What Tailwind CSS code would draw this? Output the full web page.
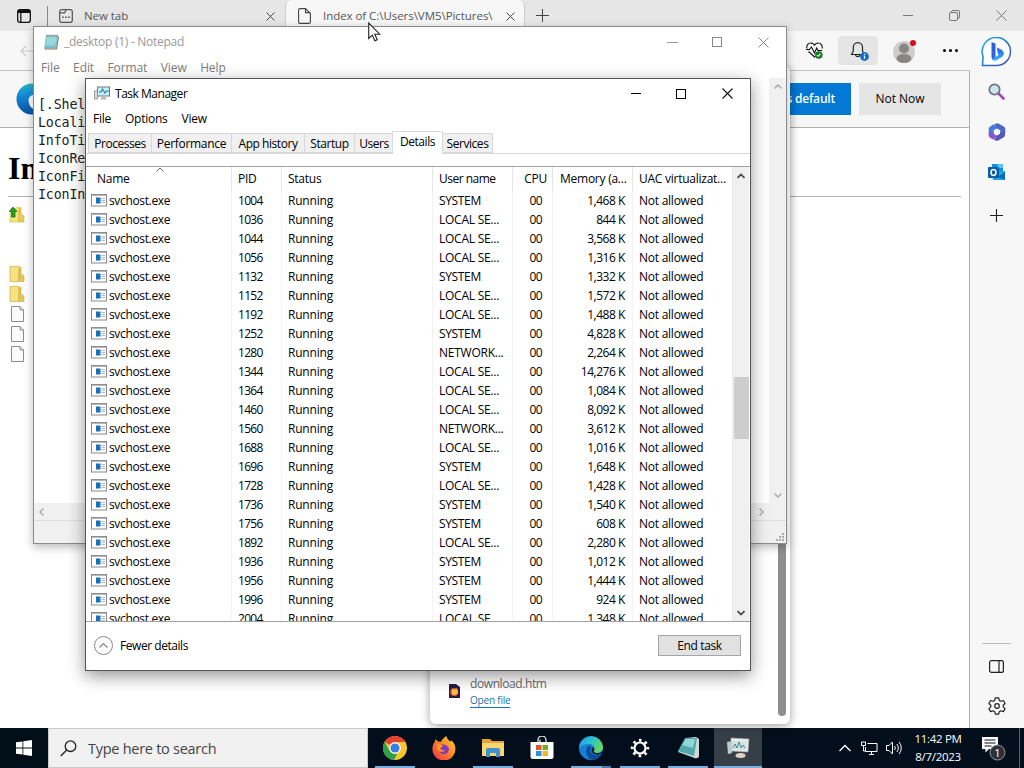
<!DOCTYPE html>
<html lang="en">
<head>
<meta charset="utf-8">
<title>Desktop</title>
<script src="https://cdn.jsdelivr.net/npm/@tailwindcss/browser@4"></script>
</head>
<body class="relative h-[768px] w-[1024px] overflow-hidden bg-white font-['Open_Sans','Noto_Sans',sans-serif] text-[12px] text-black">

<!-- Browser -->
<div class="flex h-[728px] flex-col">
  <div class="flex h-[31px] shrink-0 items-start bg-[#e6e6e6] text-[#555]">
    <svg class="ml-[17px] mt-[9px] size-[14px]" viewBox="0 0 14 14" fill="none" stroke="#111" stroke-width="1.3"><rect x=".7" y=".7" width="12.6" height="12.6" rx="2"/><path d="M1 2.5h12" stroke-width="3"/><path d="M3.8 3v10"/></svg>
    <div class="ml-[16px] mt-[6px] h-[20px] w-px bg-[#888]"></div>
    <svg class="ml-[11px] mt-[9px] size-[14px]" viewBox="0 0 14 14" fill="none" stroke="#555" stroke-width="1.2"><rect x=".7" y=".7" width="12.6" height="12.6" rx="2"/><path d="M1 3.8h4.5l1.6-2.8"/><path d="M3.2 8.2h1.6M6.2 8.2h1.6M9.2 8.2h1.6" stroke-width="1.6"/></svg>
    <div class="ml-[11px] mt-[7px] w-[44px] whitespace-nowrap text-[11.5px] leading-[18px] tracking-[-0.05px]">New tab</div>
    <svg class="ml-[138px] mt-[12px] size-[9px]" viewBox="0 0 9 9" stroke="#444"><path d="M.5.5l8 8M8.5.5l-8 8"/></svg>
    <div class="ml-[10px] flex h-[31px] w-[240px] items-start rounded-t-md border-x border-[#ccc] bg-[#f7f7f7]">
      <svg class="ml-[12px] mt-[8px] h-[16px] w-[13px]" viewBox="0 0 13 16" fill="none" stroke="#444" stroke-width="1.1"><path d="M2 .6h5.5L12.4 5.500v8.500a1.400 1.400 0 0 1-1.400 1.400H2A1.400 1.400 0 0 1 .6 14V2A1.400 1.400 0 0 1 2 .6zM7.500 .6v4h4.900"/></svg>
      <div class="ml-[12px] mt-[7px] w-[171px] whitespace-nowrap text-[11.5px] leading-[18px] tracking-[-0.05px]">Index of C:\Users\VM5\Pictures\</div>
      <svg class="ml-[12px] mt-[12px] size-[9px]" viewBox="0 0 9 9" stroke="#444"><path d="M.5.5l8 8M8.500.5l-8 8"/></svg>
    </div>
    <svg class="ml-[11px] mt-[9px] size-[13px]" viewBox="0 0 13 13" stroke="#444"><path d="M6.500 0v13M0 6.500h13"/></svg>
    <div class="ml-auto mt-[10px] mr-[17px] flex items-center">
      <div class="h-px w-[10px] bg-[#777]"></div>
      <svg class="ml-[36px] size-[11px]" viewBox="0 0 11 11" fill="none" stroke="#777"><rect x=".5" y="2.500" width="8" height="8" rx="1.500"/><path d="M2.500 2.500v-.5a1.500 1.500 0 0 1 1.500-1.500h5a1.500 1.500 0 0 1 1.500 1.500v5a1.500 1.500 0 0 1-1.500 1.500"/></svg>
      <svg class="ml-[36px] size-[11px]" viewBox="0 0 11 11" stroke="#777"><path d="M.5.5l10 10M10.500.5l-10 10"/></svg>
    </div>
  </div>

  <div class="flex min-h-0 flex-1">
    <div class="flex w-[970px] flex-col">
      <div class="flex h-[40px] shrink-0 items-center border-b border-[#c4c4c4] bg-[#f7f7f7]">
        <svg class="ml-[20px] h-[12px] w-[14px]" viewBox="0 0 14 12" fill="none" stroke="#ccc" stroke-width="1.200"><path d="M14 6H1M6 1L1 6l5 5"/></svg>
        <svg class="ml-[772px] mt-px h-[18px] w-[18px]" viewBox="0 0 18 18" fill="none" stroke="#111" stroke-width="1.100"><path d="M.9 6.500C.2 3 2.500 1 4.800 1 6.800 1 8 2.300 8.500 3.200 9 2.300 10.200 1 12.200 1c2.600 0 4.500 2.300 3.900 5.500M2.500 9.500L8.500 15l1-1M0 7.500h3.500l2-2.500 3 6 2.200-5 1.300 2.500h4"/><circle cx="12.800" cy="13" r="3.800" fill="#157a1b" stroke="none"/><path d="M11 13l1.200 1.300 2.200-2.500" stroke="#fff"/></svg>
        <div class="ml-[14px] flex h-[29px] w-[40px] items-center justify-center rounded-sm bg-[#e5e5e5]">
          <svg class="ml-[1px] h-[20px] w-[20px]" viewBox="0 0 20 20" fill="none" stroke="#222" stroke-width="1.200"><path d="M2.500 13.500L4.300 10V6.300a4.600 4.600 0 0 1 9.200 0V10l1.800 3.500zM6.500 14a2.400 2.400 0 0 0 4.500 0"/><circle cx="15.500" cy="15.500" r="4.400" fill="#1370c9" stroke="none"/><path d="M15.500 14.800v3M15.500 12.800v1.200" stroke="#fff"/></svg>
        </div>
        <svg class="ml-[14px] h-[24px] w-[24px]" viewBox="0 0 24 24"><circle cx="12" cy="13" r="11" fill="#cfcdcb"/><circle cx="12" cy="9.500" r="5" fill="#898684"/><ellipse cx="12" cy="19.500" rx="7.500" ry="4.500" fill="#898684"/><circle cx="21" cy="4" r="3" fill="#d90f1a"/></svg>
        <div class="ml-[27px] flex gap-[3px]"><i class="size-[3px] rounded-full bg-black"></i><i class="size-[3px] rounded-full bg-black"></i><i class="size-[3px] rounded-full bg-black"></i></div>
      </div>
      <div class="flex h-[57px] shrink-0 items-center border-r border-b border-[#b0b0b0] bg-[#f7f7f7]">
        <svg class="ml-[16px] size-[32px]" viewBox="0 0 32 32"><defs><linearGradient id="ed" x1="0" y1="0" x2="0" y2="1"><stop offset="0" stop-color="#29b5c9"/><stop offset=".4" stop-color="#1487d8"/><stop offset="1" stop-color="#0a4ea0"/></linearGradient></defs><circle cx="16" cy="16" r="15.500" fill="url(#ed)"/><path d="M13 20c-2-6 3-9 7-8v14c-4 0-6-2-7-6z" fill="#fff"/></svg>
        <div class="ml-[712px] flex h-[32px] w-[91px] items-center justify-end bg-[#0378d4] pr-[16px] text-[12px] font-semibold whitespace-nowrap text-white tracking-[-0.2px]">s default</div>
        <div class="ml-[8px] flex h-[32px] w-[82px] items-center justify-center bg-[#e5e5e5] text-[12px]">Not Now</div>
      </div>
      <div class="flex flex-1 flex-col border-r border-[#b0b0b0] pl-[8px]">
        <div class="mt-[21px] h-[48px] w-[953px] border-b border-[#b0b0b0] font-['Liberation_Serif',serif] text-[32px] leading-[38px] font-bold">In</div>
        <svg class="mt-[9px] ml-px h-[18px] w-[16px]" viewBox="0 0 16 18"><path d="M4 3l6-2v15H1V7z" fill="#f2e47e" stroke="#cdb545" stroke-width=".6"/><path d="M10 2.500l2-1V8l3 2v6h-5z" fill="#e6cf5a" stroke="#cfa73a" stroke-width=".6"/><path d="M0 5.500L4 1l4 4.500H6v5.500H2.500V5.500z" fill="#2d9a28" stroke="#126c12" stroke-width=".7"/></svg>
        <div class="mt-[42px] ml-px flex flex-col gap-[4px]" id="files"></div>
      </div>
    </div>
    <div class="flex w-[54px] flex-col items-center bg-[#f7f7f7] pr-px">
      <svg class="mt-[5px] size-[31px]" viewBox="0 0 31 31"><defs><linearGradient id="bg" x1="0" y1="0" x2="1" y2="1"><stop offset="0" stop-color="#2bb0ea"/><stop offset=".5" stop-color="#1a78d0"/><stop offset="1" stop-color="#4b50bd"/></linearGradient><linearGradient id="bb" x1="0" y1="0" x2="0" y2="1"><stop offset="0" stop-color="#2a5de0"/><stop offset="1" stop-color="#35b9ee"/></linearGradient></defs><path d="M15.500 1.500a14 14 0 1 1 0 28H1.500l.6-9A14 14 0 0 1 15.500 1.500z" fill="#fff" stroke="url(#bg)" stroke-width="1.500"/><path d="M10.500 6l4 1.500V20l-1 4c-2 0-3-1.500-3-3.500z" fill="#2b62e0"/><path d="M16 11.500l4.500 2.300c3 1.700 3 5.700 0 7.500l-5 2.900c-1.500.8-3.500.6-4.500-1l6.500-4.200-1-2.500z" fill="url(#bb)"/></svg>
      <svg class="mt-[16px] size-[17px]" viewBox="0 0 17 17"><path d="M10.500 10.500l5 5" stroke="#a648b5" stroke-width="2.600" stroke-linecap="round"/><circle cx="6.500" cy="6.500" r="5.200" fill="#cfe3ea" stroke="#69757d" stroke-width="1.700"/></svg>
      <svg class="mt-[23px] size-[18px]" viewBox="0 0 18 18" fill="none" stroke-width="5" stroke-linejoin="round"><path d="M7.500 3.200L3.200 5.800v6" stroke="#3f7fdc"/><path d="M3.200 9v3.500l4.300 2.300" stroke="#8a58c8"/><path d="M7.500 14.800l1.500.5 5.500-3.200V9" stroke="#5a55b9"/><path d="M14.800 10V5.900L9.500 2.800l-2 .6" stroke="#4a68cc"/></svg>
      <svg class="mt-[23px] size-[17px]" viewBox="0 0 17 17"><path d="M4 0h11v8H4z" fill="#1490df"/><path d="M9.500 0H15v4H9.500z" fill="#50c6f2"/><path d="M4 7h13v9H5z" fill="#1aa7e8"/><path d="M17 8l-7 5 7 3z" fill="#1066b8"/><rect y="3" width="11" height="11" rx="1" fill="#0a5ba5"/><ellipse cx="5.500" cy="8.500" rx="2.500" ry="2.900" fill="none" stroke="#fff" stroke-width="1.500"/></svg>
      <svg class="mt-[28px] size-[13px]" viewBox="0 0 13 13" stroke="#222" stroke-width="1.100"><path d="M6.500 0v13M0 6.500h13"/></svg>
      <div class="mt-auto h-px w-[29px] bg-[#bbb]"></div>
      <svg class="mt-[16px] h-[13px] w-[15px]" viewBox="0 0 15 13" fill="none" stroke="#222" stroke-width="1.200"><rect x=".6" y=".6" width="13.800" height="11.800" rx="2"/><path d="M10 .6v11.800"/></svg>
      <svg class="mt-[24px] mb-[13px] size-[18px]" viewBox="0 0 18 18" fill="none" stroke="#222" stroke-width="1.200" stroke-linejoin="round"><circle cx="9" cy="9" r="2.300"/><path d="M7.300 .9h3.400l.6 2.500 1.600.9 2.500-.8 1.700 3-1.900 1.700v1.700l1.900 1.700-1.700 3-2.500-.8-1.600.9-.6 2.500H7.300l-.6-2.500-1.600-.9-2.500.8-1.700-3 1.900-1.700V8.200L.9 6.500l1.700-3 2.500.8 1.600-.9z"/></svg>
    </div>
  </div>
</div>

<!-- Downloads flyout -->
<div class="absolute top-[66px] left-[430px] flex h-[658px] w-[360px] items-end rounded-md bg-white shadow-[0_2px_10px_rgba(0,0,0,.38)]">
  <svg class="mb-[26px] ml-[18px] h-[14px] w-[12px]" viewBox="0 0 12 14"><path d="M1 0h7l4 3v11H1z" fill="#2a1a4a"/><circle cx="6.300" cy="8" r="4" fill="#f2603a"/><path d="M4 5l3 1 2-2 1 5-3 2-3-1z" fill="#f8c040"/></svg>
  <div class="mb-[16px] ml-[10px] flex flex-col items-start">
    <div class="text-[12px] leading-[16px] tracking-[-0.4px] text-[#666]">download.htm</div>
    <div class="mt-px border-b border-[#1b72ad] text-[10px] leading-[14px] tracking-[-0.2px] text-[#1b72ad]">Open file</div>
  </div>
  <div class="mr-[4px] mb-[8px] ml-auto h-[560px] w-[8px] rounded-full bg-[#8e8e8e]"></div>
</div>

<!-- Notepad -->
<div class="absolute top-[26px] left-[33px] flex h-[518px] w-[754px] flex-col border border-[#8b8b8b] bg-white text-[#7c7c7c] shadow-[0_3px_9px_rgba(0,0,0,.28)]">
  <div class="flex h-[30px] shrink-0 items-center">
    <svg class="ml-[9px] size-[16px]" viewBox="0 0 16 16"><path d="M3 2h12l-2 12.500H1z" fill="#79bcc4"/><path d="M3 2h11l-1.500 10H2z" fill="#8bd0d6"/><path d="M15 2l1 1-2 12.500H2l-1-1h12z" fill="#8a7a66"/><path d="M3.500 1.500h11" stroke="#444" stroke-width="1.500" stroke-dasharray="1 1"/><path d="M4 5h9M4 7h8.500M3.500 9h8.500" stroke="#b8e6e8" stroke-width=".7"/></svg>
    <div class="ml-[5px] text-[12px] tracking-[-0.27px] whitespace-nowrap text-[#999]">_desktop (1) - Notepad</div>
    <div class="mr-[17px] ml-auto flex items-center">
      <div class="h-px w-[11px] bg-[#999]"></div>
      <div class="ml-[34px] size-[10px] border border-[#888]"></div>
      <svg class="ml-[36px] size-[11px]" viewBox="0 0 11 11" stroke="#888"><path d="M.5.5l10 10M10.500.5l-10 10"/></svg>
    </div>
  </div>
  <div class="flex h-[21px] shrink-0 items-center gap-[13.500px] pl-[7px] tracking-[-0.1px]">
    <span>File</span><span>Edit</span><span>Format</span><span>View</span><span>Help</span>
  </div>
  <div class="flex min-h-0 flex-1">
    <div class="flex-1 pt-[18px] pl-[4px] font-['DejaVu_Sans_Mono',monospace] text-[13.300px] leading-[18px] tracking-[-0.15px] text-[#222]">[.Shel<br>Locali<br>InfoTi<br>IconRe<br>IconFi<br>IconIn</div>
    <div class="flex w-[17px] flex-col items-center justify-between bg-[#f0f0f0] pt-[6px] pb-[5px]">
      <svg class="h-[5px] w-[8px]" viewBox="0 0 8 5" fill="none" stroke="#aaa" stroke-width="1.500"><path d="M.5 4.500L4 1l3.500 3.500"/></svg>
      <svg class="h-[5px] w-[8px]" viewBox="0 0 8 5" fill="none" stroke="#aaa" stroke-width="1.500"><path d="M.5.5L4 4 7.500.5"/></svg>
    </div>
  </div>
  <div class="flex h-[17px] shrink-0 items-center justify-between bg-[#f0f0f0] pr-[22px] pl-[5px]">
    <svg class="h-[8px] w-[5px]" viewBox="0 0 5 8" fill="none" stroke="#aaa" stroke-width="1.500"><path d="M4.500.5L1 4l3.500 3.500"/></svg>
    <svg class="h-[8px] w-[5px]" viewBox="0 0 5 8" fill="none" stroke="#aaa" stroke-width="1.500"><path d="M.5.5L4 4 .5 7.500"/></svg>
  </div>
  <div class="flex h-[23px] shrink-0 items-end justify-end border-t border-[#ddd] bg-[#f0f0f0] pr-px pb-px">
    <svg class="size-[9px]" viewBox="0 0 9 9" fill="#aaa"><path d="M6 0h2v2H6zM6 3h2v2H6zM3 3h2v2H3zM6 6h2v2H6zM3 6h2v2H3zM0 6h2v2H0z"/></svg>
  </div>
</div>

<!-- Task Manager -->
<div class="absolute top-[78px] left-[85px] flex h-[593px] w-[666px] flex-col border border-[#555] bg-white shadow-[0_5px_16px_rgba(0,0,0,.42)]">
  <div class="flex h-[29px] shrink-0 items-center">
    <svg class="ml-[8px] h-[15px] w-[16px]" viewBox="0 0 16 15"><rect x="3.500" y="1" width="12" height="9" fill="#c6edf3" stroke="#777"/><path d="M5 6h2l1.500-3 2.500 4 1.500-2H15" fill="none" stroke="#227fa8" stroke-width="1.100"/><path d="M8 10.500h3l2 3H6z" fill="#bbb"/><rect x=".5" y="5" width="3" height="8" fill="#ddd" stroke="#888" stroke-width=".8"/></svg>
    <div class="ml-[5px] pt-px text-[12px] tracking-[-0.48px] whitespace-nowrap">Task Manager</div>
    <div class="mr-[17px] ml-auto flex items-center">
      <div class="h-px w-[10px] bg-black"></div>
      <div class="ml-[35px] size-[10px] border border-black"></div>
      <svg class="ml-[36px] size-[11px]" viewBox="0 0 11 11" stroke="#111" stroke-width="1.100"><path d="M.5.5l10 10M10.500.5l-10 10"/></svg>
    </div>
  </div>
  <div class="flex h-[22px] shrink-0 items-center gap-[14px] pl-[7px] tracking-[-0.25px]">
    <span>File</span><span>Options</span><span>View</span>
  </div>
  <div class="flex h-[24px] shrink-0 items-end border-b border-[#d9d9d9] pl-[2px] text-[12px] leading-[19px] tracking-[-0.45px] whitespace-nowrap">
    <div class="h-[20px] w-[63px] border border-r-0 border-[#d9d9d9] bg-[#f0f0f0] text-center">Processes</div>
    <div class="h-[20px] w-[80px] border border-r-0 border-[#d9d9d9] bg-[#f0f0f0] text-center tracking-[-0.3px]">Performance</div>
    <div class="h-[20px] w-[73px] border border-r-0 border-[#d9d9d9] bg-[#f0f0f0] text-center">App history</div>
    <div class="h-[20px] w-[50px] border border-r-0 border-[#d9d9d9] bg-[#f0f0f0] text-center">Startup</div>
    <div class="h-[20px] w-[38px] border border-r-0 border-[#d9d9d9] bg-[#f0f0f0] pl-px text-center">Users</div>
    <div class="-mb-px h-[23px] w-[51px] border border-b-0 border-[#d9d9d9] bg-white text-center">Details</div>
    <div class="h-[20px] w-[50px] border border-l-0 border-[#d9d9d9] bg-[#f0f0f0] text-center">Services</div>
  </div>
  <div class="mt-[12px] flex h-[456px] shrink-0 border-y border-[#a0a0a0]">
    <div class="flex w-[646px] flex-col overflow-hidden">
      <div class="flex h-[24px] shrink-0 items-center whitespace-nowrap tracking-[-0.25px]">
        <div class="relative h-full w-[146px] border-r border-[#e5e5e5] pl-[11px] leading-[24px]">Name
          <svg class="absolute top-0 left-[70px] h-[5px] w-[8px]" viewBox="0 0 8 5" fill="none" stroke="#666"><path d="M.5 4.500L4 1l3.500 3.500"/></svg>
        </div>
        <div class="h-full w-[50px] border-r border-[#e5e5e5] pl-[6px] leading-[24px]">PID</div>
        <div class="h-full w-[151px] border-r border-[#e5e5e5] pl-[6px] leading-[24px]">Status</div>
        <div class="h-full w-[80px] border-r border-[#e5e5e5] pl-[6px] leading-[24px] tracking-[-0.5px]">User name</div>
        <div class="h-full w-[40px] border-r border-[#e5e5e5] pr-[5px] text-right leading-[24px]">CPU</div>
        <div class="h-full w-[80px] border-r border-[#e5e5e5] pl-[7px] leading-[24px]">Memory (a...</div>
        <div class="h-full w-[99px] pl-[6px] leading-[24px]">UAC virtualizat...</div>
      </div>
      <div id="rows" class="min-h-0 flex-1 overflow-hidden"></div>
    </div>
    <div class="flex w-[17px] flex-col items-center border-l border-[#e8e8e8] bg-[#f0f0f0]">
      <svg class="mt-[6px] h-[6px] w-[8px]" viewBox="0 0 8 6" fill="none" stroke="#444" stroke-width="1.700"><path d="M.5 5L4 1.500 7.500 5"/></svg>
      <div class="mt-[198px] h-[62px] w-[15px] bg-[#cdcdcd]"></div>
      <svg class="mt-auto mb-[5px] h-[6px] w-[8px]" viewBox="0 0 8 6" fill="none" stroke="#444" stroke-width="1.700"><path d="M.5 1L4 4.500 7.500 1"/></svg>
    </div>
  </div>
  <div class="flex flex-1 items-center pr-[9px] pb-px pl-[8px]">
    <svg class="size-[19px]" viewBox="0 0 19 19" fill="none" stroke="#888"><circle cx="9.500" cy="9.500" r="9"/><path d="M5.500 11.500l4-4 4 4" stroke-width="1.200"/></svg>
    <div class="ml-[7px] pt-px tracking-[-0.45px]">Fewer details</div>
    <div class="ml-auto flex h-[21px] w-[83px] items-center justify-center border border-[#a5a5a5] bg-[#e1e1e1] tracking-[-0.35px]">End task</div>
  </div>
</div>

<!-- Taskbar -->
<div class="flex h-[40px] bg-[#020e1c] text-white">
  <div class="flex w-[48px] items-center justify-center bg-[#011018]"><svg class="size-[16px]" viewBox="0 0 16 16" fill="#fff"><path d="M0 2.300L6.500 1.400v6.200H0zM7.300 1.300L16 0v7.600H7.300zM0 8.400h6.500v6.200L0 13.700zM7.300 8.400H16V16l-8.700-1.300z"/></svg></div>
  <div class="flex w-[320px] items-center border border-[#c8c8c8] bg-[#f1f1f1] text-[#444]">
    <svg class="ml-[11px] size-[17px]" viewBox="0 0 17 17" fill="none" stroke="#222" stroke-width="1.300"><circle cx="10.500" cy="6.200" r="5.300"/><path d="M6.700 10L.7 16"/></svg>
    <div class="ml-[11px] pt-px text-[14.500px] tracking-[-0.27px] whitespace-nowrap">Type here to search</div>
  </div>
  <div class="flex" id="apps">
    <div class="flex w-[54px] flex-col items-center"><svg class="mt-[8px] size-[24px]" viewBox="0 0 24 24"><circle cx="12" cy="12" r="12" fill="#f7c52d"/><path d="M12 0a12 12 0 0 1 10.400 6H12a6 6 0 0 0-5.200 3L1.600 6A12 12 0 0 1 12 0z" fill="#e24335"/><path d="M1.600 6l5.200 9A6 6 0 0 0 12 18l2 0-3 6A12 12 0 0 1 1.600 6z" fill="#2aa04c"/><circle cx="12" cy="12" r="5.800" fill="#fff"/><circle cx="12" cy="12" r="4.600" fill="#3b7de9"/></svg><div class="mt-auto h-[2px] w-[40px] bg-[#77aede]"></div></div>
    <div class="flex w-[44px] flex-col items-center"><svg class="mt-[8px] size-[24px]" viewBox="0 0 24 24"><defs><linearGradient id="ff" x1="1" y1="0" x2="0" y2="1"><stop offset="0" stop-color="#ffd83c"/><stop offset=".45" stop-color="#ff8a22"/><stop offset="1" stop-color="#f0284c"/></linearGradient></defs><path d="M14.500 0c0 2.500 2 3.500 3.500 5.500l1.500-1c3 2.500 3.900 5.500 3.900 8.500a11.500 11.500 0 0 1-23 0c0-3 1-5.500 2.500-7.500l.5-2.500 2.500 2.500 3 .2C10.500 3 12.500 1 14.500 0z" fill="url(#ff)"/><path d="M9 8l5 1 3 3c0 4-2 6-5 6s-5-2-5-5l3-1.500z" fill="#8a3ab4"/><path d="M5 8c3 0 4 0 6 2l-3 1.500c0 2 2 3 5 2.500-2 3-7 2-8-2z" fill="#ff9a28"/></svg></div>
    <div class="flex w-[54px] flex-col items-center"><svg class="mt-[10px] h-[20px] w-[22px]" viewBox="0 0 22 20"><path d="M0 1h8l2 2h12v15H0z" fill="#e2a433"/><path d="M0 5h22v13H0z" fill="#f9d673"/><path d="M4 19v-7a2 2 0 0 1 2-2h10a2 2 0 0 1 2 2v7h-4v-4H8v4z" fill="#3f93cc"/></svg><div class="mt-auto h-[2px] w-[40px] bg-[#77aede]"></div></div>
    <div class="flex w-[44px] flex-col items-center"><svg class="mt-[8px] h-[24px] w-[24px]" viewBox="0 0 24 24"><path d="M8 6V4a4 4 0 0 1 8 0v2M10 6V3.500" fill="none" stroke="#ddd" stroke-width="1.300"/><path d="M.5 6h23v15a2 2 0 0 1-2 2h-19a2 2 0 0 1-2-2z" fill="#fff"/><path d="M6 9h5.500v5H6z" fill="#e4552f"/><path d="M12.500 9H18v5h-5.500z" fill="#72a928"/><path d="M6 15h5.500v5H6z" fill="#2a91d6"/><path d="M12.500 15H18v5h-5.500z" fill="#f3b52a"/></svg></div>
    <div class="flex w-[54px] flex-col items-center"><svg class="mt-[8px] size-[24px]" viewBox="0 0 24 24"><defs><linearGradient id="e2" x1="0" y1="0" x2="1" y2=".4"><stop offset="0" stop-color="#2399e5"/><stop offset=".5" stop-color="#2cbfd6"/><stop offset="1" stop-color="#62d75a"/></linearGradient></defs><circle cx="12" cy="12" r="12" fill="#1580d4"/><path d="M.3 10A12 12 0 0 1 24 11c0 4-3.500 6-7 6-2 0-3-1-2-2.500 2-3.500-1-6.500-5-6.500C5 8 2 9.500.3 12z" fill="url(#e2)"/><path d="M9 10c-4 6-1 13 5 13.800 4-.5 7-2.500 8.500-5.800-5 2.500-11 1-11.500-4 0-1.500.5-2.500 1.500-3.500z" fill="#0d4c9a"/><path d="M14 11.500c-2 1-2 4 .5 6 3 1.800 6 1 8.500-.5l1 2v-4c-2 2-5 2.500-7 2-2-.5-3-1-2-2.500.5-1 .3-2.500-1-3z" fill="#020e1c"/></svg><div class="mt-auto flex h-[2px] w-[40px] bg-[#77aede]"><div class="ml-[31px] w-[9px] bg-[#4b7aa5]"></div></div></div>
    <div class="flex w-[44px] flex-col items-center"><svg class="mt-[10px] size-[20px]" viewBox="0 0 20 20" fill="none" stroke="#fff"><circle cx="10" cy="10" r="5.500" stroke-width="2.200"/><circle cx="10" cy="10" r="7.700" stroke-width="3" stroke-dasharray="2.500 3.547" stroke-dashoffset="1.250"/></svg><div class="mt-auto h-[2px] w-[40px] bg-[#77aede]"></div></div>
    <div class="flex w-[52px] flex-col items-center"><svg class="mt-[9px] h-[22px] w-[23px]" viewBox="0 0 23 22"><path d="M9 1l10-1 3 2v18l-3 1.500L1 15z" fill="#cfdad8"/><path d="M8 1h12l-3 18L1 14z" fill="#4fa9ad"/><path d="M9 2h9l-2 9-11-3z" fill="#91d5d6"/></svg><div class="mt-auto h-[2px] w-[40px] bg-[#77aede]"></div></div>
    <div class="flex w-[48px] flex-col items-center bg-[#363f48]"><svg class="mt-[9px] h-[22px] w-[24px]" viewBox="0 0 24 22"><path d="M5 1l18 1-1 13-17-1z" fill="#e7ecec" stroke="#aaa" stroke-width=".6"/><path d="M1 5l5-1v12l-4 1z" fill="#bcc"/><path d="M6 4h15l-1 9H6z" fill="#d3e3e4"/><path d="M7 11l2-4 2 4 2-6 2 6 2-3 2 3" fill="none" stroke="#386d78" stroke-width=".8"/><ellipse cx="14.500" cy="18.500" rx="5" ry="2.500" fill="#ddd5bd"/></svg><div class="mt-auto h-[2px] w-full bg-[#77aede]"></div></div>
  </div>
  <div class="ml-auto flex items-center">
    <svg class="h-[8px] w-[12px]" viewBox="0 0 12 8" fill="none" stroke="#fff" stroke-width="1.300"><path d="M.5 7L6 1.500 11.500 7"/></svg>
    <svg class="ml-[10px] h-[14px] w-[17px]" viewBox="0 0 17 14" fill="none" stroke="#fff"><path d="M6.500 2.500h9.500v8H4.500V6"/><path d="M.5 1h4v3.500h-4zM2.500 4.500V10h2M8 13.500h5M10.500 10.500v3"/></svg>
    <svg class="ml-[8px] h-[14px] w-[17px]" viewBox="0 0 17 14" fill="none" stroke="#fff"><path d="M.5 4.500H3L6.500 1v12L3 9.500H.5zM8.500 5a3 3 0 0 1 0 4M10.800 3a6 6 0 0 1 0 8M13 1a9 9 0 0 1 0 12"/></svg>
    <div class="ml-[8px] w-[54px] text-center text-[11.500px] leading-[18px] tracking-[-0.3px] whitespace-nowrap">11:42 PM<br>8/7/2023</div>
    <svg class="ml-[16px] h-[26px] w-[26px]" viewBox="0 0 26 26"><path d="M1 2h16v12H8l-3.500 3.500V14H1z" fill="#fff"/><path d="M3.500 5h11M3.500 8h11M3.500 11h7" stroke="#020e1c"/><circle cx="16.500" cy="17.500" r="7.500" fill="#2b3138" stroke="#999"/><text x="16.500" y="21.500" text-anchor="middle" font-size="11" font-family="Open Sans" fill="#fff">1</text></svg>
    <div class="mr-[4px] ml-[12px] h-[40px] w-px bg-[#59616a]"></div>
  </div>
</div>

<!-- Mouse pointer -->
<svg class="absolute top-[22px] left-[368px] h-[20px] w-[13px]" viewBox="0 0 13 20"><path d="M.7 1v15.500l3.600-3.400 2.500 5.700 2.500-1.100-2.500-5.500h5z" fill="#fff" stroke="#222" stroke-width="1.100"/></svg>

<script>
const L = 'LOCAL SE...', S = 'SYSTEM', N = 'NETWORK...';
const processes = [
  [1004,S,'1,468'],[1036,L,'844'],[1044,L,'3,568'],[1056,L,'1,316'],[1132,S,'1,332'],[1152,L,'1,572'],
  [1192,L,'1,488'],[1252,S,'4,828'],[1280,N,'2,264'],[1344,L,'14,276'],[1364,L,'1,084'],[1460,L,'8,092'],
  [1560,N,'3,612'],[1688,L,'1,016'],[1696,S,'1,648'],[1728,L,'1,428'],[1736,S,'1,540'],[1756,S,'608'],
  [1892,L,'2,280'],[1936,S,'1,012'],[1956,S,'1,444'],[1996,S,'924'],[2004,L,'1,348']];
document.getElementById('rows').innerHTML = processes.map(([pid, user, mem]) => `
  <div class="flex h-[19px] items-center whitespace-nowrap leading-[20px]">
    <div class="flex h-full w-[146px] items-center border-r border-[#f3f3f3] pl-[5px]">
      <svg class="h-[13px] w-[16px]" viewBox="0 0 16 13"><rect x=".5" y=".5" width="15" height="11.500" fill="#fff" stroke="#8a8a8a"/><path d="M1 1.200h14" stroke="#999"/><rect x="5" y="3.500" width="4.500" height="6" fill="#1771b9"/><path d="M10.500 4.500H14M10.500 6.500H14M10.500 8.500H14" stroke="#98a6b5" stroke-width=".8"/></svg>
      <span class="ml-[2px] tracking-[-0.35px]">svchost.exe</span></div>
    <div class="h-full w-[50px] border-r border-[#f3f3f3] pl-[6px] tracking-[-0.7px]">${pid}</div>
    <div class="h-full w-[151px] border-r border-[#f3f3f3] pl-[6px] tracking-[-0.2px]">Running</div>
    <div class="h-full w-[80px] border-r border-[#f3f3f3] pl-[6px] ${user === S ? 'tracking-[-0.35px]' : 'tracking-[-0.25px]'}">${user}</div>
    <div class="h-full w-[40px] border-r border-[#f3f3f3] pr-[10px] text-right tracking-[-0.6px]">00</div>
    <div class="h-full w-[80px] border-r border-[#f3f3f3] pr-[7px] text-right tracking-[-0.45px]">${mem} K</div>
    <div class="h-full w-[99px] pl-[6px] tracking-[-0.25px]">Not allowed</div>
  </div>`).join('');
const folder = '<svg class="h-[16px] w-[16px]" viewBox="0 0 16 16"><path d="M1 .5h9v15H1z" fill="#f6e183" stroke="#d3ad3d" stroke-width=".7"/><path d="M10 2l2-1v7l3 2v5.500h-5z" fill="#e6c45a" stroke="#cfa73a" stroke-width=".6"/></svg>';
const file = '<svg class="h-[16px] w-[16px]" viewBox="0 0 16 16"><path d="M2.500 .5h8.500l3.500 3.500v11.500h-12z" fill="#fbfbfb" stroke="#8c8c8c"/><path d="M11 .5v3.500h3.500" fill="none" stroke="#8c8c8c"/></svg>';
document.getElementById('files').innerHTML = folder + folder + file + file + file;
</script>
</body>
</html>
